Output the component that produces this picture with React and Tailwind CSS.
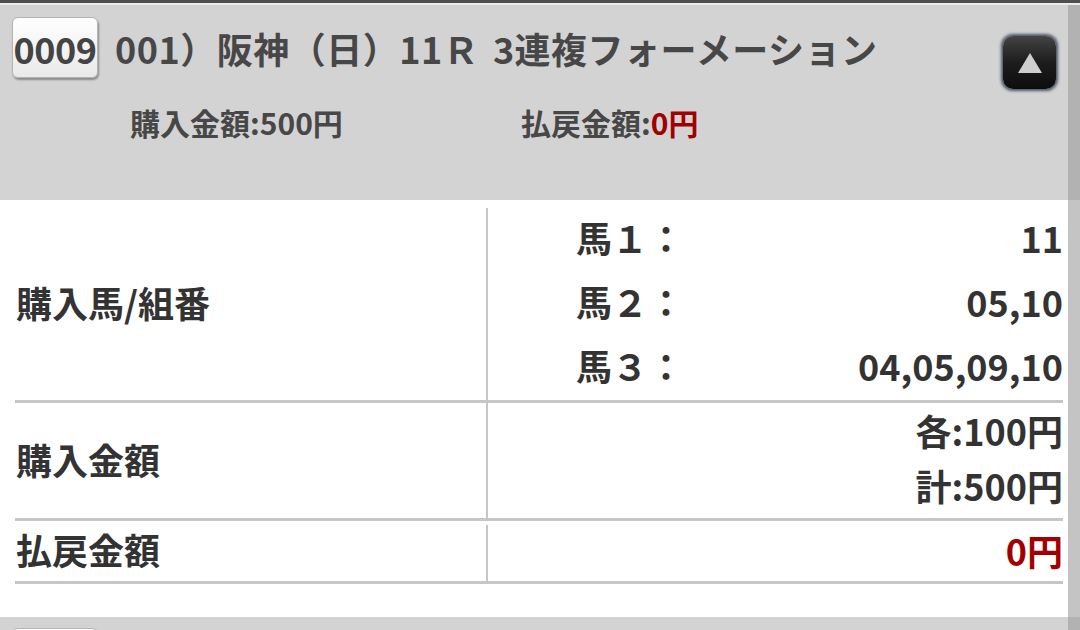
import React from 'react'

const font = { fontFamily: '"Noto Sans CJK JP", "Noto Sans", sans-serif' }

const horses = [
  { label: '馬１：', value: '11' },
  { label: '馬２：', value: '05,10' },
  { label: '馬３：', value: '04,05,09,10' },
]

const NumberBox = ({ children, className = '' }) => (
  <div
    className={`flex items-center justify-center w-[86px] h-[61px] rounded-[6px] border border-[#b4b4b4] bg-gradient-to-b from-white to-[#e9e9e9] shadow-[1px_2px_2px_rgba(0,0,0,0.35)] text-[36px] font-semibold text-[#444] tracking-[-0.5px] ${className}`}
  >
    {children}
  </div>
)

const ToggleButton = () => (
  <div className="flex items-center justify-center w-[53px] h-[53px] rounded-[10px] bg-gradient-to-b from-[#444] via-[#1d1d1d] to-[#0d0d0d] shadow-[0_0_3px_2px_rgba(30,45,70,0.75)]">
    <svg width="26" height="22" viewBox="0 0 26 22">
      <polygon points="13,1 25,21 1,21" fill="#cfcfcf" />
    </svg>
  </div>
)

export default function App() {
  return (
    <div className="relative w-[1080px] h-[630px] overflow-hidden bg-white flex flex-col" style={font}>
      <div className="shrink-0 h-[3px] bg-[#4f4f4f]" />
      <div className="shrink-0 h-[2px] bg-[#ececec]" />

      {/* header */}
      <div className="shrink-0 h-[195px] bg-[#d3d3d3] pl-[12px] pr-[24px] pt-[12px]">
        <div className="flex items-center">
          <NumberBox>0009</NumberBox>
          <h1 className="ml-[17px] text-[36px] font-bold text-[#474747] tracking-[0.5px]">
            001）阪神（日）11Ｒ <span className="ml-[5px]">3連複フォーメーション</span>
          </h1>
          <div className="ml-auto self-start mt-[19px] h-0">
            <ToggleButton />
          </div>
        </div>
        <div className="flex mt-[22px] text-[30px] font-bold text-[#474747]">
          <p className="ml-[118px] w-[391px]">購入金額:500円</p>
          <p>
            払戻金額:<span className="text-[#a00000]">0円</span>
          </p>
        </div>
      </div>

      {/* detail table */}
      <div className="shrink-0 pl-[15px] pr-[17px] pt-[8px] text-[#333] font-bold text-[36px]">
        <div className="grid grid-cols-[471px_1fr] border-b-[3px] border-[#c6c6c6]">
          <div className="flex items-center pl-[1px] pb-[4px]">購入馬/組番</div>
          <div className="border-l-2 border-[#c6c6c6]">
            {horses.map((h) => (
              <div key={h.label} className="flex items-center justify-between h-[64px] pl-[88px] pb-[6px]">
                <span>{h.label}</span>
                <span>{h.value}</span>
              </div>
            ))}
          </div>
        </div>

        <div className="grid grid-cols-[471px_1fr] border-b-[3px] border-[#c6c6c6]">
          <div className="flex items-center pl-[1px] pb-[4px]">購入金額</div>
          <div className="border-l-2 border-[#c6c6c6] pt-[2px] pb-[3px]">
            <div className="h-[55px] flex items-center justify-end pb-[5px]">各:100円</div>
            <div className="h-[55px] flex items-center justify-end pb-[5px]">計:500円</div>
          </div>
        </div>

        <div className="grid grid-cols-[471px_1fr] border-b-[3px] border-[#c6c6c6]">
          <div className="flex items-center pl-[1px] pb-[4px]">払戻金額</div>
          <div className="border-l-2 border-[#c6c6c6] mt-[4px] h-[56px] flex items-center justify-end pb-[6px] text-[#a00000]">0円</div>
        </div>
      </div>

      {/* next card, cut off */}
      <div className="shrink-0 mt-[33px] h-[40px] bg-[#d3d3d3] pl-[12px] pt-[11px]">
        <NumberBox />
      </div>

      {/* scrollbar */}
      <div className="absolute right-0 top-[5px] bottom-0 w-[12px] bg-[#9c9c9c]/60" />
    </div>
  )
}
